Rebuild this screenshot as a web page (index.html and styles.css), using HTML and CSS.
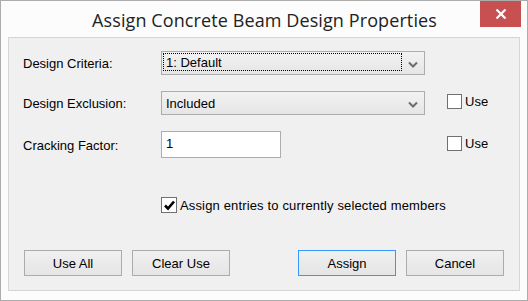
FILE: index.html
```html
<!DOCTYPE html>
<html>
<head>
<meta charset="utf-8">
<link rel="stylesheet" href="styles.css">
</head>
<body>
<div class="window">
  <div class="titlebar">
    <div class="title">Assign Concrete Beam Design Properties</div>
    <div class="close">
      <svg width="12" height="10" viewBox="0 0 12 10"><path d="M1.5 0.5 L10.5 9.5 M10.5 0.5 L1.5 9.5" stroke="#fff" stroke-width="2.2" fill="none"/></svg>
    </div>
  </div>
  <div class="panel">
    <div class="form">
      <div class="label l1">Design Criteria:</div>
      <div class="combo c1"><div class="focus">1: Default</div><svg class="chev" width="10" height="7" viewBox="0 0 10 7"><path d="M1 1.5 L5 5.5 L9 1.5" stroke="#6d6d6d" stroke-width="2" fill="none"/></svg></div>
      <div></div><div></div>

      <div class="label l2">Design Exclusion:</div>
      <div class="combo c2"><div class="val">Included</div><svg class="chev" width="10" height="7" viewBox="0 0 10 7"><path d="M1 1.5 L5 5.5 L9 1.5" stroke="#6d6d6d" stroke-width="2" fill="none"/></svg></div>
      <div></div>
      <div class="use u2"><span class="box"></span><span>Use</span></div>

      <div class="label l3">Cracking Factor:</div>
      <div class="inputcell"><div class="input">1</div></div>
      <div></div>
      <div class="use u3"><span class="box"></span><span>Use</span></div>
    </div>
    <div class="assignrow">
      <span class="box checked"><svg width="13" height="13" viewBox="0 0 13 13"><path d="M2 6.5 L5 9.5 L11 2.5" stroke="#000" stroke-width="2.6" fill="none"/></svg></span>
      <span class="assigntext">Assign entries to currently selected members</span>
    </div>
    <div class="buttons">
      <div class="group">
        <div class="btn">Use All</div>
        <div class="btn">Clear Use</div>
      </div>
      <div class="group">
        <div class="btn default">Assign</div>
        <div class="btn">Cancel</div>
      </div>
    </div>
  </div>
</div>
</body>
</html>
```

FILE: styles.css
```css
html, body {
  margin: 0;
  padding: 0;
  background: #fcfcfc;
}
.window {
  width: 528px;
  height: 301px;
  box-sizing: border-box;
  border: 1px solid #acacac;
  background: #fcfcfc;
  display: flex;
  flex-direction: column;
  font-family: "Liberation Sans", Arial, sans-serif;
  font-size: 13px;
  color: #000;
}
.titlebar {
  height: 36px;
  display: flex;
  position: relative;
  justify-content: center;
}
.title {
  font-family: "Open Sans", "Noto Sans", sans-serif;
  font-size: 18px;
  color: #222;
  line-height: 38px;
  padding-left: 1px;
  letter-spacing: 0.1px;
}
.close {
  position: absolute;
  top: 0;
  right: 6px;
  width: 41px;
  height: 26px;
  background: #c75050;
  display: flex;
  align-items: center;
  justify-content: center;
}
.panel {
  margin: 0 7px;
  height: 254px;
  box-sizing: border-box;
  border: 1px solid #d5d5d5;
  background: #f0f0f0;
  display: flex;
  flex-direction: column;
}
.form {
  display: grid;
  grid-template-columns: 138px 264px 22px auto;
  grid-template-rows: 24px 24px 27px;
  row-gap: 16px;
  padding: 13px 0 0 14px;
}
.label {
  display: flex;
  align-items: center;
  color: #000;
}
.l3 { padding-top: 2px; }
.combo {
  box-sizing: border-box;
  border: 1px solid #acacac;
  background: linear-gradient(#f2f2f2, #e6e6e6);
  display: flex;
  align-items: center;
  position: relative;
}
.focus {
  box-sizing: border-box;
  margin: 1px 0 3px 1px;
  align-self: stretch;
  width: 239px;
  border: 1px dotted #000;
  padding-left: 2px;
  display: flex;
  align-items: center;
}
.val {
  padding-left: 4px;
  flex: 1;
}
.chev {
  position: absolute;
  right: 6px;
  top: 9px;
}
.use {
  display: flex;
  align-items: center;
  gap: 3px;
}
.u2 { margin-top: -4px; }
.u3 { margin-top: -3px; }
.box {
  width: 15px;
  height: 15px;
  box-sizing: border-box;
  border: 1px solid #707070;
  background: #fff;
  display: inline-flex;
  align-items: center;
  justify-content: center;
}
.inputcell {
  display: flex;
}
.input {
  width: 120px;
  height: 27px;
  box-sizing: border-box;
  border: 1px solid #abadb3;
  background: #fff;
  padding: 4px 0 0 4px;
}
.assignrow {
  margin-top: 39px;
  padding-left: 152px;
  display: flex;
  align-items: center;
  gap: 3px;
  height: 16px;
}
.assigntext {
  letter-spacing: 0.15px;
}
.assignrow .box {
  width: 16px;
  height: 16px;
}
.buttons {
  margin-top: 37px;
  padding: 0 15px;
  display: flex;
  justify-content: space-between;
}
.group {
  display: flex;
  gap: 10px;
}
.btn {
  width: 98px;
  height: 26px;
  box-sizing: border-box;
  border: 1px solid #acacac;
  background: linear-gradient(#f0f0f0, #e5e5e5);
  display: flex;
  align-items: center;
  justify-content: center;
}
.btn.default {
  border-color: #3399ff;
}
```
